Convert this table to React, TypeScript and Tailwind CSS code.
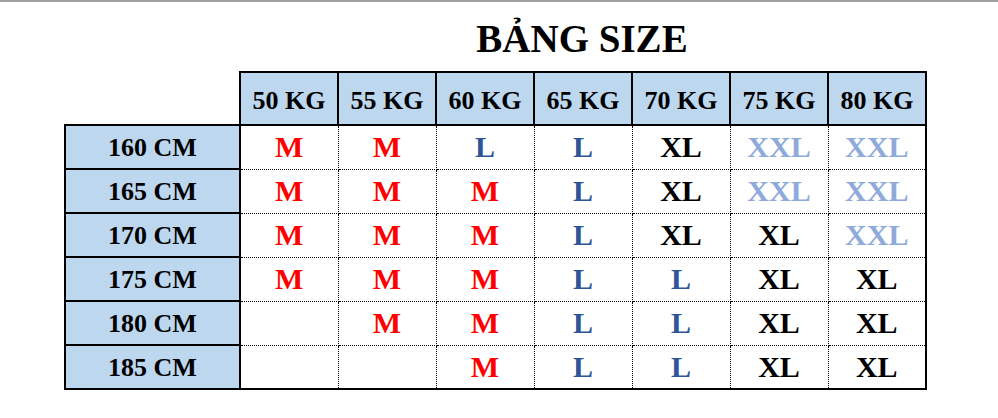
import React from 'react'

const weights = ['50 KG', '55 KG', '60 KG', '65 KG', '70 KG', '75 KG', '80 KG']

const rows: { h: string; sizes: string[] }[] = [
  { h: '160 CM', sizes: ['M', 'M', 'L', 'L', 'XL', 'XXL', 'XXL'] },
  { h: '165 CM', sizes: ['M', 'M', 'M', 'L', 'XL', 'XXL', 'XXL'] },
  { h: '170 CM', sizes: ['M', 'M', 'M', 'L', 'XL', 'XL', 'XXL'] },
  { h: '175 CM', sizes: ['M', 'M', 'M', 'L', 'L', 'XL', 'XL'] },
  { h: '180 CM', sizes: ['', 'M', 'M', 'L', 'L', 'XL', 'XL'] },
  { h: '185 CM', sizes: ['', '', 'M', 'L', 'L', 'XL', 'XL'] },
]

const sizeColor: Record<string, string> = {
  M: 'text-[#ff0000]',
  L: 'text-[#2f5597]',
  XL: 'text-black',
  XXL: 'text-[#8eaadb]',
}

export default function App() {
  return (
    <div
      className="w-[998px] h-[418px] bg-white border-t-2 border-[#a0a0a0] overflow-hidden"
      style={{ fontFamily: '"Liberation Serif", "Times New Roman", serif' }}
    >
      <div className="ml-[64px] w-[861px] pl-[175px] mt-[17px]">
        <h1 className="text-center text-[39px] leading-none font-bold text-black">BẢNG SIZE</h1>
      </div>

      <table className="ml-[64px] mt-[13px] table-fixed border-collapse w-[861px]">
        <colgroup>
          <col className="w-[175px]" />
          {weights.map(w => (
            <col key={w} className="w-[98px]" />
          ))}
        </colgroup>
        <thead>
          <tr className="h-[53px]">
            <th className="p-0" />
            {weights.map(w => (
              <th
                key={w}
                className="p-0 pt-1 bg-[#bdd7ee] border-2 border-solid border-black text-[26px] font-bold text-black text-center leading-none"
              >
                {w}
              </th>
            ))}
          </tr>
        </thead>
        <tbody>
          {rows.map(r => (
            <tr key={r.h} className="h-[44px]">
              <td className="p-0 pt-[2px] bg-[#bdd7ee] border-2 border-solid border-black text-[26px] font-bold text-black text-center leading-none">
                {r.h}
              </td>
              {r.sizes.map((s, i) => (
                <td
                  key={i}
                  className={`p-0 border border-dotted border-black text-[30px] font-bold text-center leading-none ${sizeColor[s] ?? ''} ${i === 6 ? 'border-r-2' : ''}`}
                  style={{
                    borderRightStyle: i === 6 ? 'solid' : undefined,
                  }}
                >
                  {s}
                </td>
              ))}
            </tr>
          ))}
          <tr className="h-0">
            <td className="p-0" />
            <td colSpan={7} className="p-0 border-t-2 border-solid border-black" />
          </tr>
        </tbody>
      </table>
    </div>
  )
}
